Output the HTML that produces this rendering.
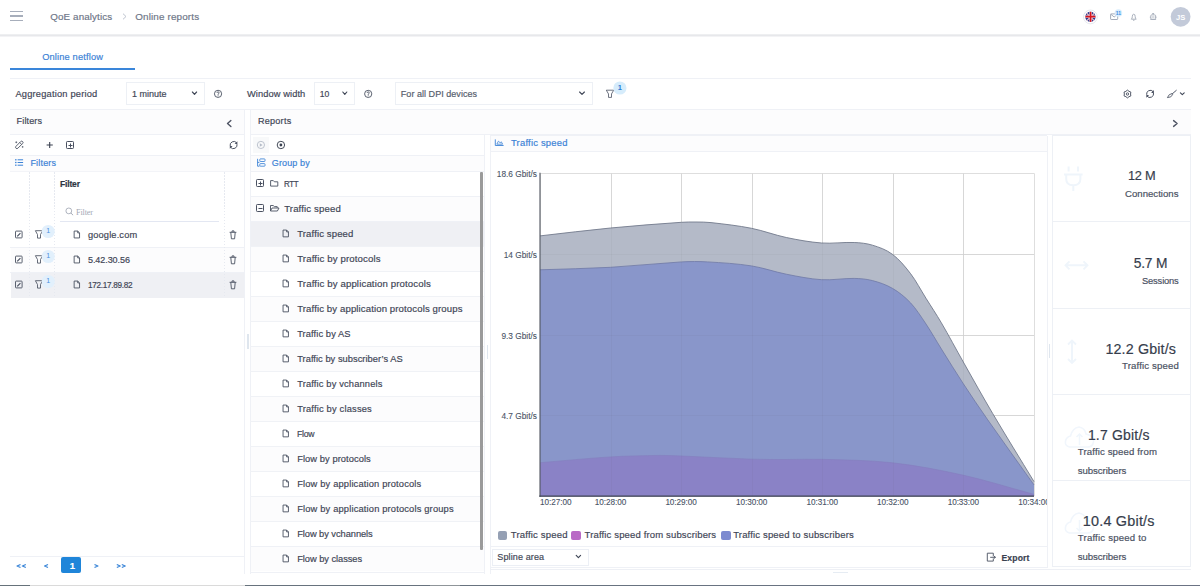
<!DOCTYPE html>
<html><head><meta charset="utf-8"><style>
html,body{margin:0;padding:0;}
body{width:1200px;height:586px;overflow:hidden;position:relative;background:#fff;font-family:"Liberation Sans",sans-serif;}
.t{position:absolute;white-space:nowrap;-webkit-text-stroke:0.18px currentColor;}
.r{position:absolute;}
.bl{display:inline-block;width:0;height:0;vertical-align:baseline;}
svg.r{overflow:visible;}
</style></head><body>
<div class="r" style="left:0.00px;top:34.00px;width:1200.00px;height:1.00px;background:#eeeff1;"></div>
<div class="r" style="left:0.00px;top:35.00px;width:1200.00px;height:1.00px;background:#e7e8eb;"></div>
<div class="r" style="left:0.00px;top:36.00px;width:1200.00px;height:1.00px;background:#f3f3f5;"></div>
<div class="r" style="left:10.30px;top:10.70px;width:12.30px;height:1.30px;background:#a7aebb;"></div>
<div class="r" style="left:10.30px;top:15.30px;width:12.30px;height:1.30px;background:#a7aebb;"></div>
<div class="r" style="left:10.30px;top:19.90px;width:12.30px;height:1.30px;background:#a7aebb;"></div>
<div class="t" style="left:50.30px;top:9.61px;font-size:9.81px;line-height:13px;color:#6e7688;letter-spacing:0.112px;">QoE analytics<span class="bl"></span></div>
<svg class="r" style="left:121.50px;top:13.00px;" width="5" height="7" viewBox="0 0 5 7"><path d="M1 0.7 L4 3.5 L1 6.3" fill="none" stroke="#b7bdca" stroke-width="0.9"/></svg>
<div class="t" style="left:135.20px;top:9.60px;font-size:9.89px;line-height:13px;color:#6e7688;letter-spacing:0.145px;">Online reports<span class="bl"></span></div>
<div class="t" style="left:42.20px;top:51.21px;font-size:9.29px;line-height:13px;color:#3b82d6;letter-spacing:0.146px;">Online netflow<span class="bl"></span></div>
<div class="r" style="left:10.20px;top:68.00px;width:124.80px;height:1.80px;background:#3a86da;"></div>
<div class="r" style="left:10.00px;top:78.00px;width:1181.00px;height:1.00px;background:#eff1f6;"></div>
<div class="t" style="left:15.40px;top:88.10px;font-size:9.30px;line-height:13px;color:#3f4656;letter-spacing:0.195px;">Aggregation period<span class="bl"></span></div>
<div class="r" style="left:126.00px;top:82.00px;width:79.00px;height:23.00px;border:1px solid #edf0f5;background:transparent;box-sizing:border-box;"></div>
<div class="t" style="left:131.90px;top:87.81px;font-size:9.00px;line-height:12px;color:#3f4656;">1 minute<span class="bl"></span></div>
<div class="t" style="left:247.00px;top:88.10px;font-size:9.30px;line-height:13px;color:#3f4656;letter-spacing:0.084px;">Window width<span class="bl"></span></div>
<div class="r" style="left:314.00px;top:82.00px;width:41.00px;height:23.00px;border:1px solid #edf0f5;background:transparent;box-sizing:border-box;"></div>
<div class="t" style="left:319.70px;top:87.81px;font-size:8.60px;line-height:12px;color:#3f4656;">10<span class="bl"></span></div>
<div class="r" style="left:395.00px;top:82.00px;width:198.00px;height:23.00px;border:1px solid #edf0f5;background:transparent;box-sizing:border-box;"></div>
<div class="t" style="left:400.80px;top:87.81px;font-size:9.00px;line-height:12px;color:#555c6c;letter-spacing:0.038px;">For all DPI devices<span class="bl"></span></div>
<div class="r" style="left:10.00px;top:109.00px;width:1181.00px;height:1.00px;background:#eff1f6;"></div>
<div class="r" style="left:10.00px;top:110.00px;width:235.00px;height:24.00px;background:#fcfcfd;"></div>
<div class="r" style="left:244.00px;top:110.00px;width:1.00px;height:464.00px;background:#eff1f6;"></div>
<div class="t" style="left:16.60px;top:115.32px;font-size:9.07px;line-height:12px;color:#3f4656;letter-spacing:0.124px;">Filters<span class="bl"></span></div>
<div class="r" style="left:10.00px;top:134.00px;width:235.00px;height:1.00px;background:#eff1f6;"></div>
<div class="r" style="left:10.00px;top:155.00px;width:235.00px;height:1.00px;background:#eff1f6;"></div>
<div class="r" style="left:10.00px;top:156.00px;width:234.00px;height:15.00px;background:#fcfcfd;"></div>
<div class="t" style="left:30.40px;top:156.81px;font-size:9.00px;line-height:12px;color:#3b82d6;letter-spacing:0.187px;">Filters<span class="bl"></span></div>
<div class="r" style="left:10.00px;top:171.00px;width:235.00px;height:1.00px;background:#f3f4f8;"></div>
<div class="t" style="left:60.00px;top:178.01px;font-size:8.50px;line-height:12px;color:#2f3542;letter-spacing:-0.157px;font-weight:bold;">Filter<span class="bl"></span></div>
<div class="t" style="left:76.00px;top:207.01px;font-size:8.22px;line-height:11px;color:#a3a9b5;letter-spacing:-0.158px;font-family:'Liberation Serif',serif;-webkit-text-stroke:0;">Filter<span class="bl"></span></div>
<div class="r" style="left:60.00px;top:220.60px;width:159.00px;height:1.20px;background:#e3e7f2;"></div>
<div class="r" style="left:10.00px;top:247.00px;width:235.00px;height:1.00px;background:#eff1f6;"></div>
<div class="r" style="left:11.00px;top:248.00px;width:233.00px;height:24.00px;background:#fcfcfd;"></div>
<div class="r" style="left:10.00px;top:272.00px;width:235.00px;height:1.00px;background:#eff1f6;"></div>
<div class="r" style="left:11.00px;top:273.00px;width:233.00px;height:25.00px;background:#eff0f4;"></div>
<div class="r" style="left:29.0px;top:172px;width:1px;height:126px;background:repeating-linear-gradient(to bottom,#e6e9f0 0 1.5px,transparent 1.5px 3px);"></div>
<div class="r" style="left:54.0px;top:172px;width:1px;height:126px;background:repeating-linear-gradient(to bottom,#e6e9f0 0 1.5px,transparent 1.5px 3px);"></div>
<div class="r" style="left:224.2px;top:172px;width:1px;height:126px;background:repeating-linear-gradient(to bottom,#e6e9f0 0 1.5px,transparent 1.5px 3px);"></div>
<div class="t" style="left:88.00px;top:229.21px;font-size:9.25px;line-height:13px;color:#3f4656;letter-spacing:0.145px;">google.com<span class="bl"></span></div>
<div class="t" style="left:88.00px;top:254.00px;font-size:9.00px;line-height:12px;color:#3f4656;letter-spacing:-0.069px;">5.42.30.56<span class="bl"></span></div>
<div class="t" style="left:88.00px;top:280.00px;font-size:8.29px;line-height:11px;color:#3f4656;letter-spacing:-0.300px;transform:scaleX(0.9885);transform-origin:0.00px 0;">172.17.89.82<span class="bl"></span></div>
<div class="r" style="left:10.00px;top:556.00px;width:235.00px;height:1.00px;background:#eff1f6;"></div>
<div class="r" style="left:61.30px;top:557.30px;width:19.80px;height:16.00px;background:#1f85d9;border-radius:2px;"></div>
<div class="t" style="left:69.70px;top:559.00px;font-size:9.50px;line-height:13px;color:#ffffff;font-weight:bold;">1<span class="bl"></span></div>
<div class="r" style="left:247.20px;top:334.00px;width:1.60px;height:15.00px;background:#dfe6ee;"></div>
<div class="r" style="left:250.00px;top:110.00px;width:941.00px;height:24.00px;background:#fcfcfd;"></div>
<div class="r" style="left:250.00px;top:110.00px;width:1.00px;height:464.00px;background:#eff1f6;"></div>
<div class="t" style="left:257.90px;top:114.81px;font-size:9.05px;line-height:12px;color:#3f4656;letter-spacing:0.273px;">Reports<span class="bl"></span></div>
<div class="r" style="left:250.00px;top:134.00px;width:941.00px;height:1.00px;background:#eff1f6;"></div>
<div class="r" style="left:484.00px;top:135.00px;width:1.00px;height:439.00px;background:#eff1f6;"></div>
<div class="r" style="left:253.00px;top:137.00px;width:16.40px;height:16.00px;background:#f8f9fa;"></div>
<div class="r" style="left:250.00px;top:155.00px;width:235.00px;height:1.00px;background:#eff1f6;"></div>
<div class="r" style="left:251.00px;top:156.00px;width:233.00px;height:15.00px;background:#fcfcfd;"></div>
<div class="t" style="left:271.80px;top:156.72px;font-size:9.00px;line-height:12px;color:#3b82d6;letter-spacing:0.124px;">Group by<span class="bl"></span></div>
<div class="r" style="left:250.00px;top:171.00px;width:235.00px;height:1.00px;background:#eff1f6;"></div>
<div class="r" style="left:251.00px;top:197.00px;width:233.00px;height:24.00px;background:#fcfcfd;"></div>
<div class="t" style="left:284.00px;top:178.80px;font-size:8.43px;line-height:11px;color:#3f4656;letter-spacing:-0.300px;transform:scaleX(0.9410);transform-origin:0.00px 0;">RTT<span class="bl"></span></div>
<div class="r" style="left:250.00px;top:196.00px;width:235.00px;height:1.00px;background:#eff1f6;"></div>
<div class="t" style="left:284.20px;top:201.72px;font-size:9.59px;line-height:13px;color:#3f4656;letter-spacing:0.142px;">Traffic speed<span class="bl"></span></div>
<div class="r" style="left:250.00px;top:221.00px;width:235.00px;height:1.00px;background:#eff1f6;"></div>
<div class="r" style="left:251.00px;top:222.00px;width:233.00px;height:24.50px;background:#eff0f4;"></div>
<div class="r" style="left:251.00px;top:247.00px;width:233.00px;height:24.00px;background:#fcfcfd;"></div>
<div class="r" style="left:251.00px;top:297.00px;width:233.00px;height:24.00px;background:#fcfcfd;"></div>
<div class="r" style="left:251.00px;top:347.00px;width:233.00px;height:24.00px;background:#fcfcfd;"></div>
<div class="r" style="left:251.00px;top:397.00px;width:233.00px;height:24.00px;background:#fcfcfd;"></div>
<div class="r" style="left:251.00px;top:447.00px;width:233.00px;height:24.00px;background:#fcfcfd;"></div>
<div class="r" style="left:251.00px;top:497.00px;width:233.00px;height:24.00px;background:#fcfcfd;"></div>
<div class="r" style="left:251.00px;top:547.00px;width:233.00px;height:24.00px;background:#fcfcfd;"></div>
<div class="t" style="left:297.20px;top:226.61px;font-size:9.55px;line-height:13px;color:#3f4656;letter-spacing:0.125px;">Traffic speed<span class="bl"></span></div>
<div class="r" style="left:250.00px;top:246.00px;width:235.00px;height:1.00px;background:#f0f2f6;"></div>
<div class="t" style="left:297.20px;top:251.60px;font-size:9.62px;line-height:13px;color:#3f4656;letter-spacing:0.146px;">Traffic by protocols<span class="bl"></span></div>
<div class="r" style="left:250.00px;top:271.00px;width:235.00px;height:1.00px;background:#f0f2f6;"></div>
<div class="t" style="left:297.20px;top:276.60px;font-size:9.62px;line-height:13px;color:#3f4656;letter-spacing:0.143px;">Traffic by application protocols<span class="bl"></span></div>
<div class="r" style="left:250.00px;top:296.00px;width:235.00px;height:1.00px;background:#f0f2f6;"></div>
<div class="t" style="left:297.20px;top:301.60px;font-size:9.57px;line-height:13px;color:#3f4656;letter-spacing:0.124px;">Traffic by application protocols groups<span class="bl"></span></div>
<div class="r" style="left:250.00px;top:321.00px;width:235.00px;height:1.00px;background:#f0f2f6;"></div>
<div class="t" style="left:297.20px;top:327.60px;font-size:9.30px;line-height:13px;color:#3f4656;letter-spacing:0.098px;">Traffic by AS<span class="bl"></span></div>
<div class="r" style="left:250.00px;top:346.00px;width:235.00px;height:1.00px;background:#f0f2f6;"></div>
<div class="t" style="left:297.20px;top:352.60px;font-size:9.30px;line-height:13px;color:#3f4656;letter-spacing:0.037px;">Traffic by subscriber’s AS<span class="bl"></span></div>
<div class="r" style="left:250.00px;top:371.00px;width:235.00px;height:1.00px;background:#f0f2f6;"></div>
<div class="t" style="left:297.20px;top:377.60px;font-size:9.30px;line-height:13px;color:#3f4656;letter-spacing:0.157px;">Traffic by vchannels<span class="bl"></span></div>
<div class="r" style="left:250.00px;top:396.00px;width:235.00px;height:1.00px;background:#f0f2f6;"></div>
<div class="t" style="left:297.20px;top:402.60px;font-size:9.30px;line-height:13px;color:#3f4656;letter-spacing:0.192px;">Traffic by classes<span class="bl"></span></div>
<div class="r" style="left:250.00px;top:421.00px;width:235.00px;height:1.00px;background:#f0f2f6;"></div>
<div class="t" style="left:297.20px;top:427.60px;font-size:8.77px;line-height:12px;color:#3f4656;letter-spacing:-0.300px;transform:scaleX(0.9913);transform-origin:0.00px 0;">Flow<span class="bl"></span></div>
<div class="r" style="left:250.00px;top:446.00px;width:235.00px;height:1.00px;background:#f0f2f6;"></div>
<div class="t" style="left:297.20px;top:452.60px;font-size:9.30px;line-height:13px;color:#3f4656;letter-spacing:0.078px;">Flow by protocols<span class="bl"></span></div>
<div class="r" style="left:250.00px;top:471.00px;width:235.00px;height:1.00px;background:#f0f2f6;"></div>
<div class="t" style="left:297.20px;top:477.60px;font-size:9.30px;line-height:13px;color:#3f4656;letter-spacing:0.167px;">Flow by application protocols<span class="bl"></span></div>
<div class="r" style="left:250.00px;top:496.00px;width:235.00px;height:1.00px;background:#f0f2f6;"></div>
<div class="t" style="left:297.20px;top:502.60px;font-size:9.30px;line-height:13px;color:#3f4656;letter-spacing:0.171px;">Flow by application protocols groups<span class="bl"></span></div>
<div class="r" style="left:250.00px;top:521.00px;width:235.00px;height:1.00px;background:#f0f2f6;"></div>
<div class="t" style="left:297.20px;top:527.60px;font-size:9.30px;line-height:13px;color:#3f4656;letter-spacing:-0.056px;">Flow by vchannels<span class="bl"></span></div>
<div class="r" style="left:250.00px;top:546.00px;width:235.00px;height:1.00px;background:#f0f2f6;"></div>
<div class="t" style="left:297.20px;top:552.60px;font-size:9.30px;line-height:13px;color:#3f4656;letter-spacing:-0.047px;">Flow by classes<span class="bl"></span></div>
<div class="r" style="left:250.00px;top:546.00px;width:235.00px;height:1.00px;background:#eff1f6;"></div>
<div class="r" style="left:250.00px;top:571.50px;width:235.00px;height:1.00px;background:#eff1f6;"></div>
<div class="r" style="left:480.20px;top:172.00px;width:2.60px;height:378.00px;background:#9a9a9a;border-radius:1px;"></div>
<div class="r" style="left:486.60px;top:345.00px;width:1.60px;height:14.00px;background:#dfe6ee;"></div>
<div class="r" style="left:490.00px;top:134.50px;width:557.00px;height:1.50px;background:#eff1f6;"></div>
<div class="r" style="left:490.00px;top:136.00px;width:1.00px;height:438.00px;background:#eff1f6;"></div>
<div class="r" style="left:1047.00px;top:136.00px;width:1.00px;height:432.00px;background:#eff1f6;"></div>
<div class="r" style="left:491.00px;top:136.00px;width:556.00px;height:15.00px;background:#fcfcfd;"></div>
<div class="r" style="left:490.00px;top:151.00px;width:557.00px;height:1.00px;background:#eff1f6;"></div>
<div class="t" style="left:511.00px;top:135.60px;font-size:9.42px;line-height:13px;color:#3b82d6;letter-spacing:0.212px;">Traffic speed<span class="bl"></span></div>
<div class="r" style="left:490.00px;top:546.00px;width:557.00px;height:1.00px;background:#eff1f6;"></div>
<div class="r" style="left:491.50px;top:548.50px;width:97.50px;height:17.00px;border:1px solid #eceff5;background:transparent;box-sizing:border-box;"></div>
<div class="t" style="left:497.30px;top:550.91px;font-size:9.02px;line-height:12px;color:#3f4656;letter-spacing:0.113px;">Spline area<span class="bl"></span></div>
<div class="t" style="left:1001.50px;top:552.00px;font-size:8.60px;line-height:12px;color:#3a4150;letter-spacing:0.136px;font-weight:bold;">Export<span class="bl"></span></div>
<div class="r" style="left:490.00px;top:567.00px;width:557.00px;height:1.00px;background:#eff1f6;"></div>
<div class="r" style="left:490.00px;top:569.00px;width:701.00px;height:1.00px;background:#eef0f5;"></div>
<div class="r" style="left:833.00px;top:571.50px;width:15.00px;height:1.20px;background:#e6ecf3;"></div>
<div class="r" style="left:1052.00px;top:135.00px;width:139.00px;height:432.00px;border:1px solid #edf0f5;background:transparent;box-sizing:border-box;"></div>
<div class="r" style="left:1052.00px;top:221.00px;width:139.00px;height:1.00px;background:#edf0f5;"></div>
<div class="r" style="left:1052.00px;top:307.50px;width:139.00px;height:1.00px;background:#edf0f5;"></div>
<div class="r" style="left:1052.00px;top:394.00px;width:139.00px;height:1.00px;background:#edf0f5;"></div>
<div class="r" style="left:1052.00px;top:480.00px;width:139.00px;height:1.00px;background:#edf0f5;"></div>
<div class="r" style="left:1048.60px;top:344.00px;width:1.80px;height:14.00px;background:#dfe6ee;"></div>
<svg class="r" style="left:0.00px;top:0.00px;" width="1200" height="586" viewBox="0 0 1200 586"><path d="M1068.6 166.5 V171.6 M1078 166.5 V171.6 M1064 174.5 H1082.6 M1066.2 174.5 V179 Q1066.2 185.3 1073.3 185.3 Q1080.4 185.3 1080.4 179 V174.5 M1073.3 185.3 V191" fill="none" stroke="#eff5fb" stroke-width="2"/><path d="M1065.5 265.3 H1087.5 M1069.5 261.3 L1065.5 265.3 L1069.5 269.3 M1083.5 261.3 L1087.5 265.3 L1083.5 269.3" fill="none" stroke="#eff5fb" stroke-width="1.9"/><path d="M1072 340.5 V363 M1068 344.5 L1072 340.5 L1076 344.5 M1068 359 L1072 363 L1076 359" fill="none" stroke="#eff5fb" stroke-width="1.9"/><path d="M1069.5 447.00 Q1064.5 446.00 1065.5 441.00 Q1066.5 437.00 1070.5 436.00 Q1072.5 428.00 1079 427.00 Q1085 428.00 1086 434.00 Q1094.5 436.00 1093.5 442.00 Q1092.5 447.00 1088 447.00 Z" fill="none" stroke="#f1f6fc" stroke-width="1.6"/><path d="M1079.5 445.00 V434.00 M1076.5 437.00 L1079.5 434.00 L1082.5 437.00" fill="none" stroke="#f0f6fc" stroke-width="1.5"/><path d="M1069.5 533.00 Q1064.5 532.00 1065.5 527.00 Q1066.5 523.00 1070.5 522.00 Q1072.5 514.00 1079 513.00 Q1085 514.00 1086 520.00 Q1094.5 522.00 1093.5 528.00 Q1092.5 533.00 1088 533.00 Z" fill="none" stroke="#f1f6fc" stroke-width="1.6"/><path d="M1079.5 520.00 V531.00 M1076.5 528.00 L1079.5 531.00 L1082.5 528.00" fill="none" stroke="#f0f6fc" stroke-width="1.5"/></svg>
<div class="t" style="left:1128.40px;top:167.31px;font-size:13.08px;line-height:18px;color:#363d4c;letter-spacing:-0.300px;transform:scaleX(0.9783);transform-origin:0.00px 0;">12 M<span class="bl"></span></div>
<div class="t" style="left:1125.00px;top:186.91px;font-size:9.60px;line-height:13px;color:#4a5162;letter-spacing:0.012px;">Connections<span class="bl"></span></div>
<div class="t" style="left:1133.70px;top:254.60px;font-size:13.80px;line-height:18px;color:#363d4c;letter-spacing:-0.175px;">5.7 M<span class="bl"></span></div>
<div class="t" style="left:1142.00px;top:274.61px;font-size:9.33px;line-height:13px;color:#4a5162;letter-spacing:-0.153px;">Sessions<span class="bl"></span></div>
<div class="t" style="left:1105.40px;top:340.41px;font-size:14.30px;line-height:19px;color:#363d4c;letter-spacing:0.147px;">12.2 Gbit/s<span class="bl"></span></div>
<div class="t" style="left:1122.00px;top:358.80px;font-size:9.60px;line-height:13px;color:#4a5162;letter-spacing:0.153px;">Traffic speed<span class="bl"></span></div>
<div class="t" style="left:1087.90px;top:426.20px;font-size:14.00px;line-height:19px;color:#363d4c;letter-spacing:0.187px;">1.7 Gbit/s<span class="bl"></span></div>
<div class="t" style="left:1077.80px;top:444.61px;font-size:9.60px;line-height:13px;color:#4a5162;letter-spacing:0.138px;">Traffic speed from<span class="bl"></span></div>
<div class="t" style="left:1077.80px;top:463.50px;font-size:9.60px;line-height:13px;color:#4a5162;letter-spacing:-0.050px;">subscribers<span class="bl"></span></div>
<div class="t" style="left:1082.80px;top:512.22px;font-size:14.41px;line-height:19px;color:#363d4c;letter-spacing:0.203px;">10.4 Gbit/s<span class="bl"></span></div>
<div class="t" style="left:1077.80px;top:530.80px;font-size:9.60px;line-height:13px;color:#4a5162;letter-spacing:0.199px;">Traffic speed to<span class="bl"></span></div>
<div class="t" style="left:1077.80px;top:549.80px;font-size:9.60px;line-height:13px;color:#4a5162;letter-spacing:-0.050px;">subscribers<span class="bl"></span></div>
<div class="r" style="left:0.00px;top:584.70px;width:1200.00px;height:1.30px;background:linear-gradient(to right,#66727a,#687380 50%,#6b7384);"></div>
<div class="r" style="left:30.00px;top:584.70px;width:215.00px;height:1.30px;background:#dadada;"></div>
<div class="r" style="left:430.00px;top:584.70px;width:30.00px;height:1.30px;background:#8f9599;"></div>
<svg class="r" style="left:0.00px;top:0.00px;" width="1200" height="586" viewBox="0 0 1200 586"><line x1="540.50" y1="173.30" x2="540.50" y2="496.20" stroke="#dedede" stroke-width="1"/><line x1="611.50" y1="173.30" x2="611.50" y2="496.20" stroke="#dedede" stroke-width="1"/><line x1="681.50" y1="173.30" x2="681.50" y2="496.20" stroke="#dedede" stroke-width="1"/><line x1="752.50" y1="173.30" x2="752.50" y2="496.20" stroke="#dedede" stroke-width="1"/><line x1="822.50" y1="173.30" x2="822.50" y2="496.20" stroke="#dedede" stroke-width="1"/><line x1="893.50" y1="173.30" x2="893.50" y2="496.20" stroke="#dedede" stroke-width="1"/><line x1="963.50" y1="173.30" x2="963.50" y2="496.20" stroke="#dedede" stroke-width="1"/><line x1="1034.50" y1="173.30" x2="1034.50" y2="496.20" stroke="#dedede" stroke-width="1"/><line x1="540.00" y1="173.50" x2="1034.00" y2="173.50" stroke="#dedede" stroke-width="1"/><line x1="540.00" y1="254.50" x2="1034.00" y2="254.50" stroke="#dedede" stroke-width="1"/><line x1="540.00" y1="335.50" x2="1034.00" y2="335.50" stroke="#dedede" stroke-width="1"/><line x1="540.00" y1="415.50" x2="1034.00" y2="415.50" stroke="#dedede" stroke-width="1"/><path d="M540.00 235.90 C563.50 233.27 587.00 230.26 610.50 228.00 C634.17 225.73 657.83 223.96 681.50 222.30 C686.33 221.96 691.17 221.95 696.00 222.00 C701.00 222.05 706.00 222.03 711.00 222.60 C724.50 224.13 738.00 225.63 751.50 228.30 C763.10 230.60 774.70 235.07 786.30 237.50 C798.10 239.97 809.90 242.13 821.70 243.00 C832.53 243.80 843.37 242.03 854.20 242.50 C860.30 242.76 866.40 243.30 872.50 245.20 C879.23 247.30 885.97 249.46 892.70 254.50 C898.70 258.99 904.70 265.91 910.70 273.80 C915.80 280.51 920.90 290.14 926.00 298.30 C931.13 306.51 936.27 314.13 941.40 322.90 C948.70 335.37 956.00 349.10 963.30 362.00 C973.13 379.37 982.97 397.07 992.80 413.70 C1006.53 436.93 1020.27 458.97 1034.00 481.60 L1034.00 496.20 L540.00 496.20 Z" fill="#b4bac8" stroke="none"/><path d="M540.00 235.90 C563.50 233.27 587.00 230.26 610.50 228.00 C634.17 225.73 657.83 223.96 681.50 222.30 C686.33 221.96 691.17 221.95 696.00 222.00 C701.00 222.05 706.00 222.03 711.00 222.60 C724.50 224.13 738.00 225.63 751.50 228.30 C763.10 230.60 774.70 235.07 786.30 237.50 C798.10 239.97 809.90 242.13 821.70 243.00 C832.53 243.80 843.37 242.03 854.20 242.50 C860.30 242.76 866.40 243.30 872.50 245.20 C879.23 247.30 885.97 249.46 892.70 254.50 C898.70 258.99 904.70 265.91 910.70 273.80 C915.80 280.51 920.90 290.14 926.00 298.30 C931.13 306.51 936.27 314.13 941.40 322.90 C948.70 335.37 956.00 349.10 963.30 362.00 C973.13 379.37 982.97 397.07 992.80 413.70 C1006.53 436.93 1020.27 458.97 1034.00 481.60" fill="none" stroke="#737b8c" stroke-width="0.9"/><path d="M540.00 269.80 C563.50 268.97 587.00 268.61 610.50 267.30 C634.17 265.98 657.83 263.22 681.50 261.90 C690.17 261.42 698.83 261.40 707.50 261.90 C722.17 262.74 736.83 263.61 751.50 265.90 C763.10 267.71 774.70 271.92 786.30 274.20 C798.10 276.52 809.90 278.97 821.70 279.70 C832.53 280.37 843.37 278.21 854.20 278.40 C860.30 278.51 866.40 279.00 872.50 280.60 C879.23 282.37 885.97 284.55 892.70 288.50 C898.70 292.02 904.70 296.60 910.70 303.00 C915.80 308.44 920.90 316.36 926.00 324.00 C931.13 331.69 936.27 340.78 941.40 349.00 C948.70 360.68 956.00 372.54 963.30 383.70 C971.30 395.94 979.30 407.75 987.30 419.20 C1002.87 441.48 1018.43 463.00 1034.00 484.90 L1034.00 496.20 L540.00 496.20 Z" fill="#8996ca" stroke="none"/><path d="M540.00 269.80 C563.50 268.97 587.00 268.61 610.50 267.30 C634.17 265.98 657.83 263.22 681.50 261.90 C690.17 261.42 698.83 261.40 707.50 261.90 C722.17 262.74 736.83 263.61 751.50 265.90 C763.10 267.71 774.70 271.92 786.30 274.20 C798.10 276.52 809.90 278.97 821.70 279.70 C832.53 280.37 843.37 278.21 854.20 278.40 C860.30 278.51 866.40 279.00 872.50 280.60 C879.23 282.37 885.97 284.55 892.70 288.50 C898.70 292.02 904.70 296.60 910.70 303.00 C915.80 308.44 920.90 316.36 926.00 324.00 C931.13 331.69 936.27 340.78 941.40 349.00 C948.70 360.68 956.00 372.54 963.30 383.70 C971.30 395.94 979.30 407.75 987.30 419.20 C1002.87 441.48 1018.43 463.00 1034.00 484.90" fill="none" stroke="#6f79a6" stroke-width="0.8"/><path d="M540.00 462.70 C563.47 460.77 586.93 458.33 610.40 456.90 C626.93 455.89 643.47 455.61 660.00 455.40 C667.30 455.31 674.60 455.70 681.90 456.00 C705.50 456.97 729.10 458.40 752.70 459.20 C763.47 459.57 774.23 459.48 785.00 459.50 C797.13 459.52 809.27 458.93 821.40 459.30 C845.17 460.03 868.93 460.13 892.70 462.80 C916.40 465.46 940.10 470.00 963.80 475.30 C987.20 480.53 1010.60 488.03 1034.00 494.40 L1034.00 496.20 L540.00 496.20 Z" fill="#8a82c6" stroke="none"/><path d="M540.00 462.70 C563.47 460.77 586.93 458.33 610.40 456.90 C626.93 455.89 643.47 455.61 660.00 455.40 C667.30 455.31 674.60 455.70 681.90 456.00 C705.50 456.97 729.10 458.40 752.70 459.20 C763.47 459.57 774.23 459.48 785.00 459.50 C797.13 459.52 809.27 458.93 821.40 459.30 C845.17 460.03 868.93 460.13 892.70 462.80 C916.40 465.46 940.10 470.00 963.80 475.30 C987.20 480.53 1010.60 488.03 1034.00 494.40" fill="none" stroke="#857dbd" stroke-width="0.6"/><line x1="611.50" y1="173.30" x2="611.50" y2="496.20" stroke="rgba(60,60,80,0.045)" stroke-width="1"/><line x1="681.50" y1="173.30" x2="681.50" y2="496.20" stroke="rgba(60,60,80,0.045)" stroke-width="1"/><line x1="752.50" y1="173.30" x2="752.50" y2="496.20" stroke="rgba(60,60,80,0.045)" stroke-width="1"/><line x1="822.50" y1="173.30" x2="822.50" y2="496.20" stroke="rgba(60,60,80,0.045)" stroke-width="1"/><line x1="893.50" y1="173.30" x2="893.50" y2="496.20" stroke="rgba(60,60,80,0.045)" stroke-width="1"/><line x1="963.50" y1="173.30" x2="963.50" y2="496.20" stroke="rgba(60,60,80,0.045)" stroke-width="1"/><line x1="540.00" y1="254.50" x2="1034.00" y2="254.50" stroke="rgba(60,60,80,0.045)" stroke-width="1"/><line x1="540.00" y1="335.50" x2="1034.00" y2="335.50" stroke="rgba(60,60,80,0.045)" stroke-width="1"/><line x1="540.00" y1="415.50" x2="1034.00" y2="415.50" stroke="rgba(60,60,80,0.045)" stroke-width="1"/><line x1="540.00" y1="172.80" x2="540.00" y2="496.80" stroke="#50555f" stroke-width="1.1"/><line x1="539.30" y1="496.20" x2="1034.00" y2="496.20" stroke="#3f4552" stroke-width="1.3"/></svg>
<div class="t" style="left:496.80px;top:168.60px;font-size:8.30px;line-height:11px;color:#4a5366;letter-spacing:0.007px;-webkit-text-stroke:0.1px currentColor;">18.6 Gbit/s<span class="bl"></span></div>
<div class="t" style="left:503.74px;top:249.82px;font-size:8.30px;line-height:11px;color:#4a5366;letter-spacing:0.007px;-webkit-text-stroke:0.1px currentColor;">14 Gbit/s<span class="bl"></span></div>
<div class="t" style="left:501.41px;top:330.82px;font-size:8.30px;line-height:11px;color:#4a5366;letter-spacing:0.007px;-webkit-text-stroke:0.1px currentColor;">9.3 Gbit/s<span class="bl"></span></div>
<div class="t" style="left:501.41px;top:410.82px;font-size:8.30px;line-height:11px;color:#4a5366;letter-spacing:0.007px;-webkit-text-stroke:0.1px currentColor;">4.7 Gbit/s<span class="bl"></span></div>
<div class="t" style="left:540.00px;top:497.41px;font-size:8.20px;line-height:11px;color:#4a5366;letter-spacing:-0.063px;-webkit-text-stroke:0.1px currentColor;">10:27:00<span class="bl"></span></div>
<div class="t" style="left:594.82px;top:497.41px;font-size:8.20px;line-height:11px;color:#4a5366;letter-spacing:-0.063px;-webkit-text-stroke:0.1px currentColor;">10:28:00<span class="bl"></span></div>
<div class="t" style="left:665.39px;top:497.41px;font-size:8.20px;line-height:11px;color:#4a5366;letter-spacing:-0.063px;-webkit-text-stroke:0.1px currentColor;">10:29:00<span class="bl"></span></div>
<div class="t" style="left:735.96px;top:497.41px;font-size:8.20px;line-height:11px;color:#4a5366;letter-spacing:-0.063px;-webkit-text-stroke:0.1px currentColor;">10:30:00<span class="bl"></span></div>
<div class="t" style="left:806.54px;top:497.41px;font-size:8.20px;line-height:11px;color:#4a5366;letter-spacing:-0.063px;-webkit-text-stroke:0.1px currentColor;">10:31:00<span class="bl"></span></div>
<div class="t" style="left:877.11px;top:497.41px;font-size:8.20px;line-height:11px;color:#4a5366;letter-spacing:-0.063px;-webkit-text-stroke:0.1px currentColor;">10:32:00<span class="bl"></span></div>
<div class="t" style="left:947.68px;top:497.41px;font-size:8.20px;line-height:11px;color:#4a5366;letter-spacing:-0.063px;-webkit-text-stroke:0.1px currentColor;">10:33:00<span class="bl"></span></div>
<div class="t" style="left:1018.25px;top:497.41px;font-size:8.20px;line-height:11px;color:#4a5366;letter-spacing:-0.063px;-webkit-text-stroke:0.1px currentColor;">10:34:00<span class="bl"></span></div>
<div class="r" style="left:1047.00px;top:495.00px;width:5.00px;height:15.00px;background:#fff;"></div>
<div class="r" style="left:1047.00px;top:136.00px;width:1.00px;height:432.00px;background:#eff1f6;"></div>
<div class="r" style="left:497.50px;top:530.50px;width:9.70px;height:9.50px;background:#95a0b4;border-radius:2px;"></div>
<div class="t" style="left:510.80px;top:528.00px;font-size:9.55px;line-height:13px;color:#3f4656;letter-spacing:0.171px;">Traffic speed<span class="bl"></span></div>
<div class="r" style="left:571.30px;top:530.50px;width:9.70px;height:9.50px;background:#b96ac6;border-radius:2px;"></div>
<div class="t" style="left:584.60px;top:528.00px;font-size:9.51px;line-height:13px;color:#3f4656;letter-spacing:0.148px;">Traffic speed from subscribers<span class="bl"></span></div>
<div class="r" style="left:721.00px;top:530.50px;width:9.70px;height:9.50px;background:#7d8bd0;border-radius:2px;"></div>
<div class="t" style="left:733.20px;top:528.01px;font-size:9.53px;line-height:13px;color:#3f4656;letter-spacing:0.156px;">Traffic speed to subscribers<span class="bl"></span></div>
<svg class="r" style="left:0.00px;top:0.00px;" width="1200" height="586" viewBox="0 0 1200 586"><circle cx="1090.4" cy="16.9" r="6.9" fill="#fff" stroke="#dfe3ea" stroke-width="0.8"/><clipPath id="fc"><circle cx="1090.4" cy="16.9" r="5.1"/></clipPath><g clip-path="url(#fc)"><rect x="1084" y="10" width="13" height="14" fill="#2a3a8f"/><path d="M1084 10.5 L1097 23.5 M1097 10.5 L1084 23.5" stroke="#fff" stroke-width="1.1"/><path d="M1084 10.5 L1097 23.5 M1097 10.5 L1084 23.5" stroke="#d3162a" stroke-width="0.45"/><path d="M1090.6 10 V24 M1084 16.65 H1097" stroke="#fff" stroke-width="2.4"/><path d="M1090.6 10 V24 M1084 16.65 H1097" stroke="#d8141e" stroke-width="1.7"/></g><rect x="1110.6" y="13.9" width="7.1" height="5.6" rx="0.6" fill="none" stroke="#9aa3b3" stroke-width="0.9"/><path d="M1110.8 14.2 L1114.15 17 L1117.5 14.2" fill="none" stroke="#9aa3b3" stroke-width="0.9"/><circle cx="1118.40" cy="13.00" r="3.80" fill="#d9ecfc"/><text x="1118.40" y="14.80" font-size="5.00" fill="#3d8be0" text-anchor="middle" font-family="Liberation Sans" font-weight="bold">11</text><path d="M1131.3 19.2 Q1132.3 18.4 1132.3 16.6 Q1132.3 14.2 1133.75 14.2 Q1135.2 14.2 1135.2 16.6 Q1135.2 18.4 1136.2 19.2 Z" fill="none" stroke="#a0a8b6" stroke-width="0.9" stroke-linejoin="round"/><path d="M1133.1 20.3 H1134.4" stroke="#a0a8b6" stroke-width="0.9"/><path d="M1152.2 13.5 H1154.1 M1153.15 13.5 V14.8" fill="none" stroke="#a0a8b6" stroke-width="0.8"/><rect x="1150.8" y="14.9" width="4.8" height="4.4" rx="0.8" fill="none" stroke="#a0a8b6" stroke-width="0.85"/><path d="M1151.9 17.0 H1154.5 M1149.8 17.2 H1150.8 M1155.6 17.2 H1156.6 M1150.2 19.4 H1156.1" fill="none" stroke="#a0a8b6" stroke-width="0.8"/><circle cx="1180.6" cy="16.8" r="9.9" fill="#c3cad9"/><text x="1180.8" y="19.8" font-size="7.6" fill="#fff" text-anchor="middle" font-family="Liberation Sans" font-weight="bold" letter-spacing="0.2">JS</text><path d="M192.40 92.00 L194.50 94.30 L196.60 92.00" fill="none" stroke="#3f4656" stroke-width="1.15" stroke-linecap="round" stroke-linejoin="round"/><path d="M342.80 92.00 L344.80 94.40 L346.80 92.00" fill="none" stroke="#3f4656" stroke-width="1.15" stroke-linecap="round" stroke-linejoin="round"/><path d="M579.60 92.00 L582.00 94.40 L584.40 92.00" fill="none" stroke="#3f4656" stroke-width="1.15" stroke-linecap="round" stroke-linejoin="round"/><circle cx="218.05" cy="93.85" r="3.6" fill="none" stroke="#4a5161" stroke-width="0.9"/><path d="M216.95 92.95 Q216.95 91.85 218.05 91.85 Q219.20 91.85 219.15 92.95 Q219.05 93.65 218.05 94.15 L218.05 94.85" fill="none" stroke="#4a5161" stroke-width="0.85"/><circle cx="218.05" cy="95.75" r="0.5" fill="#4a5161"/><circle cx="368.20" cy="93.90" r="3.6" fill="none" stroke="#4a5161" stroke-width="0.9"/><path d="M367.10 93.00 Q367.10 91.90 368.20 91.90 Q369.35 91.90 369.30 93.00 Q369.20 93.70 368.20 94.20 L368.20 94.90" fill="none" stroke="#4a5161" stroke-width="0.85"/><circle cx="368.20" cy="95.80" r="0.5" fill="#4a5161"/><path d="M606.30 90.20 L613.70 90.20 L611.50 93.96 L611.50 97.40 L608.50 97.40 L608.50 93.96 Z" fill="none" stroke="#4a5161" stroke-width="0.8" stroke-linejoin="round"/><circle cx="619.90" cy="88.00" r="6.60" fill="#d6ecfb"/><text x="619.90" y="89.70" font-size="7.50" fill="#2b7fd6" text-anchor="middle" font-family="Liberation Sans" font-weight="bold">1</text><path d="M1127.45 97.90 L1125.90 96.68 L1124.07 95.95 L1124.35 94.00 L1124.07 92.05 L1125.90 91.32 L1127.45 90.10 L1129.00 91.32 L1130.83 92.05 L1130.55 94.00 L1130.83 95.95 L1129.00 96.68 Z" fill="none" stroke="#4a5161" stroke-width="0.95" stroke-linejoin="round"/><circle cx="1127.45" cy="94" r="1.2" fill="none" stroke="#4a5161" stroke-width="0.9"/><path d="M1146.70 94.80 A3.7 3.7 0 0 1 1153.20 91.70" fill="none" stroke="#4a5161" stroke-width="1.0"/><path d="M1153.50 93.00 A3.7 3.7 0 0 1 1147.00 96.10" fill="none" stroke="#4a5161" stroke-width="1.0"/><path d="M1153.90 90.10 L1153.90 92.90 L1151.10 92.90 Z" fill="#4a5161"/><path d="M1146.30 97.70 L1146.30 94.90 L1149.10 94.90 Z" fill="#4a5161"/><path d="M1176.6 90.1 L1171.9 94.2" stroke="#4a5161" stroke-width="0.95"/><path d="M1172.0 93.6 Q1168.8 93.8 1167.4 97.6 Q1171.6 97.6 1172.6 94.6 Z" fill="none" stroke="#4a5161" stroke-width="0.85" stroke-linejoin="round"/><path d="M1180.40 92.90 L1182.30 94.60 L1184.20 92.90" fill="none" stroke="#3f4656" stroke-width="1.15" stroke-linecap="round" stroke-linejoin="round"/><path d="M230.9 120.6 L227.5 123.6 L230.9 126.6" fill="none" stroke="#4d5363" stroke-width="1.4" stroke-linecap="round" stroke-linejoin="round"/><g transform="rotate(-45 19.3 144.9)"><rect x="14.6" y="143.55" width="9.4" height="2.7" rx="1.35" fill="none" stroke="#4a5161" stroke-width="0.85"/><line x1="21.3" y1="143.55" x2="21.3" y2="146.25" stroke="#4a5161" stroke-width="0.8"/></g><path d="M15.4 142.3 H17.2 M16.3 141.4 V143.2" stroke="#4a5161" stroke-width="0.75"/><path d="M21.8 146.9 H23.4 M22.6 146.1 V147.7" stroke="#4a5161" stroke-width="0.7"/><path d="M46.6 145 H52.8 M49.7 141.9 V148.1" stroke="#3a4150" stroke-width="1.1"/><rect x="66.50" y="141.50" width="7.00" height="7.00" rx="0.8" fill="none" stroke="#4a5161" stroke-width="1"/><line x1="68.50" y1="145.50" x2="72.50" y2="145.50" stroke="#4a5161" stroke-width="1"/><line x1="70.50" y1="143.50" x2="70.50" y2="147.50" stroke="#4a5161" stroke-width="1"/><path d="M230.20 145.95 A3.7 3.7 0 0 1 236.70 142.85" fill="none" stroke="#4a5161" stroke-width="1.0"/><path d="M237.00 144.15 A3.7 3.7 0 0 1 230.50 147.25" fill="none" stroke="#4a5161" stroke-width="1.0"/><path d="M237.40 141.25 L237.40 144.05 L234.60 144.05 Z" fill="#4a5161"/><path d="M229.80 148.85 L229.80 146.05 L232.60 146.05 Z" fill="#4a5161"/><rect x="15.1" y="159.15" width="1.4" height="1.3" fill="#3b82d6"/><rect x="17.6" y="159.30" width="5.5" height="1.0" fill="#3b82d6"/><rect x="15.1" y="161.85" width="1.4" height="1.3" fill="#3b82d6"/><rect x="17.6" y="162.00" width="5.5" height="1.0" fill="#3b82d6"/><rect x="15.1" y="164.55" width="1.4" height="1.3" fill="#3b82d6"/><rect x="17.6" y="164.70" width="5.5" height="1.0" fill="#3b82d6"/><circle cx="68.8" cy="210.9" r="2.9" fill="none" stroke="#a6acb8" stroke-width="0.9"/><path d="M70.9 213.0 L73.1 215.2" stroke="#a6acb8" stroke-width="1"/><rect x="15.5" y="231.10" width="6.6" height="6.8" rx="0.6" fill="none" stroke="#4a5161" stroke-width="0.9"/><path d="M17.2 236.30 L20.4 233.10" stroke="#4a5161" stroke-width="1.2"/><path d="M35.40 230.70 L42.60 230.70 L40.50 234.57 L40.50 238.10 L37.50 238.10 L37.50 234.57 Z" fill="none" stroke="#4a5161" stroke-width="0.85" stroke-linejoin="round"/><circle cx="48.20" cy="231.50" r="6.60" fill="#e2f0fc"/><text x="48.20" y="232.82" font-size="7.00" fill="#4a8fe0" text-anchor="middle" font-family="Liberation Sans" >1</text><path d="M74.15 231.05 L77.70 231.05 L79.55 232.90 L79.55 237.95 L74.15 237.95 Z M77.70 231.05 L77.70 232.90 L79.55 232.90" fill="none" stroke="#4a5161" stroke-width="0.9" stroke-linejoin="round"/><path d="M230.8 232.40 L231.4 238.80 H234.6 L235.2 232.40 M229.6 232.30 H236.4 M232 232.30 V230.90 H234 V232.30" fill="none" stroke="#4a5161" stroke-width="0.9" stroke-linejoin="round"/><rect x="15.5" y="256.10" width="6.6" height="6.8" rx="0.6" fill="none" stroke="#4a5161" stroke-width="0.9"/><path d="M17.2 261.30 L20.4 258.10" stroke="#4a5161" stroke-width="1.2"/><path d="M35.40 255.70 L42.60 255.70 L40.50 259.57 L40.50 263.10 L37.50 263.10 L37.50 259.57 Z" fill="none" stroke="#4a5161" stroke-width="0.85" stroke-linejoin="round"/><circle cx="48.20" cy="256.50" r="6.60" fill="#e2f0fc"/><text x="48.20" y="257.82" font-size="7.00" fill="#4a8fe0" text-anchor="middle" font-family="Liberation Sans" >1</text><path d="M74.15 256.05 L77.70 256.05 L79.55 257.90 L79.55 262.95 L74.15 262.95 Z M77.70 256.05 L77.70 257.90 L79.55 257.90" fill="none" stroke="#4a5161" stroke-width="0.9" stroke-linejoin="round"/><path d="M230.8 257.40 L231.4 263.80 H234.6 L235.2 257.40 M229.6 257.30 H236.4 M232 257.30 V255.90 H234 V257.30" fill="none" stroke="#4a5161" stroke-width="0.9" stroke-linejoin="round"/><rect x="15.5" y="281.10" width="6.6" height="6.8" rx="0.6" fill="none" stroke="#4a5161" stroke-width="0.9"/><path d="M17.2 286.30 L20.4 283.10" stroke="#4a5161" stroke-width="1.2"/><path d="M35.40 280.70 L42.60 280.70 L40.50 284.57 L40.50 288.10 L37.50 288.10 L37.50 284.57 Z" fill="none" stroke="#4a5161" stroke-width="0.85" stroke-linejoin="round"/><circle cx="48.20" cy="281.50" r="6.60" fill="#e2f0fc"/><text x="48.20" y="282.82" font-size="7.00" fill="#4a8fe0" text-anchor="middle" font-family="Liberation Sans" >1</text><path d="M74.15 281.05 L77.70 281.05 L79.55 282.90 L79.55 287.95 L74.15 287.95 Z M77.70 281.05 L77.70 282.90 L79.55 282.90" fill="none" stroke="#4a5161" stroke-width="0.9" stroke-linejoin="round"/><path d="M230.8 282.40 L231.4 288.80 H234.6 L235.2 282.40 M229.6 282.30 H236.4 M232 282.30 V280.90 H234 V282.30" fill="none" stroke="#4a5161" stroke-width="0.9" stroke-linejoin="round"/><path d="M20.50 564.50 L17.10 566.00 L20.50 567.50" fill="none" stroke="#3b86d8" stroke-width="1.3" stroke-linejoin="round"/><path d="M25.80 564.50 L22.40 566.00 L25.80 567.50" fill="none" stroke="#3b86d8" stroke-width="1.3" stroke-linejoin="round"/><path d="M48.00 564.50 L44.60 566.00 L48.00 567.50" fill="none" stroke="#3b86d8" stroke-width="1.3" stroke-linejoin="round"/><path d="M94.50 564.50 L97.90 566.00 L94.50 567.50" fill="none" stroke="#3b86d8" stroke-width="1.3" stroke-linejoin="round"/><path d="M116.80 564.50 L120.20 566.00 L116.80 567.50" fill="none" stroke="#3b86d8" stroke-width="1.3" stroke-linejoin="round"/><path d="M121.80 564.50 L125.20 566.00 L121.80 567.50" fill="none" stroke="#3b86d8" stroke-width="1.3" stroke-linejoin="round"/><path d="M1173.6 120.6 L1177.1 123.5 L1173.6 126.4" fill="none" stroke="#4d5363" stroke-width="1.4" stroke-linecap="round" stroke-linejoin="round"/><circle cx="260.9" cy="144.95" r="3.6" fill="none" stroke="#b5bcc8" stroke-width="0.9"/><path d="M259.8 143.2 L262.6 144.95 L259.8 146.7 Z" fill="#b5bcc8"/><circle cx="280.9" cy="145" r="3.7" fill="none" stroke="#3a4150" stroke-width="0.95"/><circle cx="280.9" cy="145" r="1.4" fill="#3a4150"/><path d="M257.6 158.8 V166.2 H259.4 M257.6 162.4 H259.4" fill="none" stroke="#3b82d6" stroke-width="0.9"/><rect x="259.8" y="158.9" width="5.2" height="2.6" rx="0.6" fill="none" stroke="#3b82d6" stroke-width="0.85"/><rect x="259.8" y="163.6" width="5.2" height="2.6" rx="0.6" fill="none" stroke="#3b82d6" stroke-width="0.85"/><rect x="256.50" y="179.50" width="7.00" height="7.00" rx="0.8" fill="none" stroke="#4a5161" stroke-width="1"/><line x1="258.50" y1="183.50" x2="262.50" y2="183.50" stroke="#4a5161" stroke-width="1"/><line x1="260.50" y1="181.50" x2="260.50" y2="185.50" stroke="#4a5161" stroke-width="1"/><path d="M270.6 180.6 H273.3 L274.4 181.8 H277.8 V186.1 H270.6 Z" fill="none" stroke="#4a5161" stroke-width="0.9" stroke-linejoin="round"/><rect x="256.50" y="204.50" width="7.00" height="7.00" rx="0.8" fill="none" stroke="#4a5161" stroke-width="1"/><line x1="258.50" y1="208.50" x2="262.50" y2="208.50" stroke="#4a5161" stroke-width="1"/><path d="M270.5 211 V205.5 H273.2 L274.3 206.6 H277.2 V207.9 M270.5 211 L272 208 H279 L277.4 211 Z" fill="none" stroke="#4a5161" stroke-width="0.9" stroke-linejoin="round"/><path d="M283.05 230.05 L286.60 230.05 L288.45 231.90 L288.45 236.85 L283.05 236.85 Z M286.60 230.05 L286.60 231.90 L288.45 231.90" fill="none" stroke="#4a5161" stroke-width="0.9" stroke-linejoin="round"/><path d="M283.05 255.05 L286.60 255.05 L288.45 256.90 L288.45 261.85 L283.05 261.85 Z M286.60 255.05 L286.60 256.90 L288.45 256.90" fill="none" stroke="#4a5161" stroke-width="0.9" stroke-linejoin="round"/><path d="M283.05 280.05 L286.60 280.05 L288.45 281.90 L288.45 286.85 L283.05 286.85 Z M286.60 280.05 L286.60 281.90 L288.45 281.90" fill="none" stroke="#4a5161" stroke-width="0.9" stroke-linejoin="round"/><path d="M283.05 305.05 L286.60 305.05 L288.45 306.90 L288.45 311.85 L283.05 311.85 Z M286.60 305.05 L286.60 306.90 L288.45 306.90" fill="none" stroke="#4a5161" stroke-width="0.9" stroke-linejoin="round"/><path d="M283.05 330.05 L286.60 330.05 L288.45 331.90 L288.45 336.85 L283.05 336.85 Z M286.60 330.05 L286.60 331.90 L288.45 331.90" fill="none" stroke="#4a5161" stroke-width="0.9" stroke-linejoin="round"/><path d="M283.05 355.05 L286.60 355.05 L288.45 356.90 L288.45 361.85 L283.05 361.85 Z M286.60 355.05 L286.60 356.90 L288.45 356.90" fill="none" stroke="#4a5161" stroke-width="0.9" stroke-linejoin="round"/><path d="M283.05 380.05 L286.60 380.05 L288.45 381.90 L288.45 386.85 L283.05 386.85 Z M286.60 380.05 L286.60 381.90 L288.45 381.90" fill="none" stroke="#4a5161" stroke-width="0.9" stroke-linejoin="round"/><path d="M283.05 405.05 L286.60 405.05 L288.45 406.90 L288.45 411.85 L283.05 411.85 Z M286.60 405.05 L286.60 406.90 L288.45 406.90" fill="none" stroke="#4a5161" stroke-width="0.9" stroke-linejoin="round"/><path d="M283.05 430.05 L286.60 430.05 L288.45 431.90 L288.45 436.85 L283.05 436.85 Z M286.60 430.05 L286.60 431.90 L288.45 431.90" fill="none" stroke="#4a5161" stroke-width="0.9" stroke-linejoin="round"/><path d="M283.05 455.05 L286.60 455.05 L288.45 456.90 L288.45 461.85 L283.05 461.85 Z M286.60 455.05 L286.60 456.90 L288.45 456.90" fill="none" stroke="#4a5161" stroke-width="0.9" stroke-linejoin="round"/><path d="M283.05 480.05 L286.60 480.05 L288.45 481.90 L288.45 486.85 L283.05 486.85 Z M286.60 480.05 L286.60 481.90 L288.45 481.90" fill="none" stroke="#4a5161" stroke-width="0.9" stroke-linejoin="round"/><path d="M283.05 505.05 L286.60 505.05 L288.45 506.90 L288.45 511.85 L283.05 511.85 Z M286.60 505.05 L286.60 506.90 L288.45 506.90" fill="none" stroke="#4a5161" stroke-width="0.9" stroke-linejoin="round"/><path d="M283.05 530.05 L286.60 530.05 L288.45 531.90 L288.45 536.85 L283.05 536.85 Z M286.60 530.05 L286.60 531.90 L288.45 531.90" fill="none" stroke="#4a5161" stroke-width="0.9" stroke-linejoin="round"/><path d="M283.05 555.05 L286.60 555.05 L288.45 556.90 L288.45 561.85 L283.05 561.85 Z M286.60 555.05 L286.60 556.90 L288.45 556.90" fill="none" stroke="#4a5161" stroke-width="0.9" stroke-linejoin="round"/><path d="M495.3 139.4 V145.5 H503.6" fill="none" stroke="#3b82d6" stroke-width="0.9"/><path d="M496.8 144.2 L498.4 141.2 L500.2 142.8 L501.3 141.8 L502.6 144.2 Z" fill="none" stroke="#3b82d6" stroke-width="0.8" stroke-linejoin="round"/><path d="M576.20 555.30 L578.40 557.60 L580.60 555.30" fill="none" stroke="#3f4656" stroke-width="1.15" stroke-linecap="round" stroke-linejoin="round"/><path d="M993.3 556.3 V553.2 H987.3 V561.1 H993.3 V558.4" fill="none" stroke="#4a5161" stroke-width="0.9" stroke-linejoin="round"/><path d="M990.2 557.3 H995.2 M994 556.2 L995.6 557.3 L994 558.4" fill="none" stroke="#4a5161" stroke-width="0.9"/></svg>
</body></html>
